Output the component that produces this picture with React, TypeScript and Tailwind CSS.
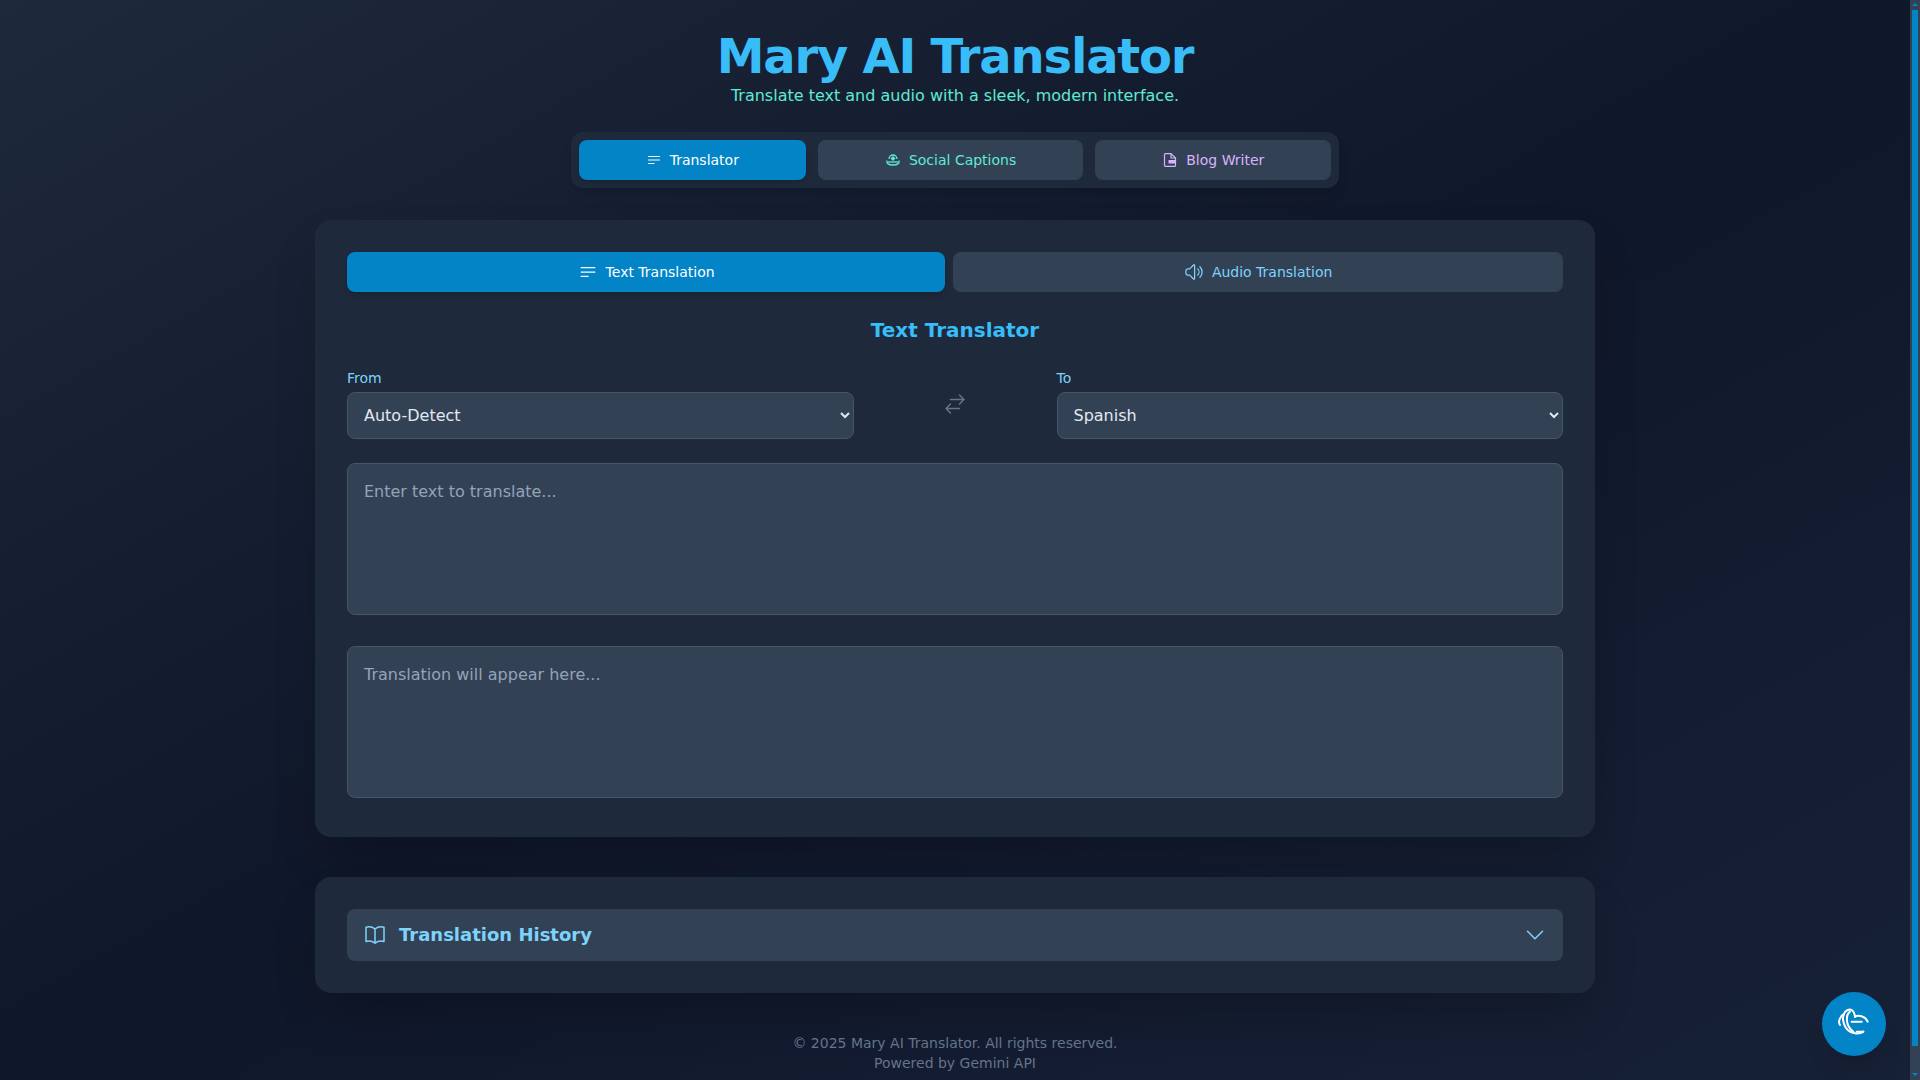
import {
  HiOutlineBars3BottomLeft,
  HiOutlineSpeakerWave,
  HiOutlineArrowsRightLeft,
  HiOutlineBookOpen,
  HiOutlineChevronDown,
} from "react-icons/hi2";

function ChatGlobeIcon() {
  return (
    <svg viewBox="0 0 24 24" fill="none" stroke="currentColor" strokeWidth="1.5" strokeLinecap="round" strokeLinejoin="round" className="size-8">
      <path d="M1.5 12.75C-0.2 10.5 1.5 6 4.5 4.5C5 2 8.5 0.5 10.25 1.5C11.8 2.5 12.5 4.5 12.75 6.5" />
      <path d="M12.75 6.5C15 5 20.5 6 22.25 10.25" />
      <path d="M4.5 4.5C2.5 9 5 15.5 9 17.75C11 19 16 20 19 17.75" />
      <path d="M9 2.75C6 5 5 13 11.5 17.75" />
      <path d="M10.25 10.25H17.75M14 17.75H19" />
    </svg>
  );
}

// 16px glyph in the tab bar: small badge on a tray
function SocialIcon() {
  return (
    <svg viewBox="0 0 16 16" fill="none" stroke="currentColor" strokeWidth="1.3" className="size-4">
      <path d="M2 8.5C1.3 11.5 3.5 13 8 13C12.5 13 14.7 11.5 14 8.5" />
      <path d="M4 7C4 4.8 5.8 3 8 3C10.2 3 12 4.8 12 7" />
      <path d="M8 4L10.5 6.5L8 9L5.5 6.5Z" fill="currentColor" stroke="none" />
      <path d="M2.5 10H13.5" />
    </svg>
  );
}

function BlogIcon() {
  return (
    <svg viewBox="0 0 16 16" fill="none" stroke="currentColor" strokeWidth="1.2" strokeLinejoin="round" className="size-4">
      <path d="M2.5 2.5C2.5 2 2.9 1.6 3.5 1.6H9L13.5 6V13.5C13.5 14 13.1 14.4 12.5 14.4H3.5C2.9 14.4 2.5 14 2.5 13.5Z" />
      <path d="M9 1.6V6H13.5" />
      <rect x="6.5" y="8" width="6.5" height="3.5" fill="currentColor" stroke="none" />
    </svg>
  );
}

const fieldClass = "w-full rounded-lg border border-[#475569] bg-[#334155] text-[#e2e8f0]";

export default function App() {
  return (
    <div className="flex h-screen bg-gradient-to-br from-[#1e293b] via-[#0f172a] to-[#172136] font-['DejaVu_Sans',sans-serif]">
      <div className="flex-1 overflow-y-auto [scrollbar-width:none]">
        <div className="mx-auto flex max-w-7xl flex-col pt-8">
          <header className="text-center">
            <h1 className="text-5xl font-bold tracking-tight text-[#38bdf8]">Mary AI Translator</h1>
            <p className="mt-1 text-base text-[#5eead4]">Translate text and audio with a sleek, modern interface.</p>
          </header>

          <nav className="mx-auto mt-6 flex gap-3 rounded-xl bg-[#1e293b] p-2 shadow-lg">
            <button className="flex h-10 items-center gap-2 rounded-lg bg-[#0284c7] px-[67px] text-sm text-white shadow-md">
              <HiOutlineBars3BottomLeft className="size-4" />
              Translator
            </button>
            <button className="flex h-10 items-center gap-2 rounded-lg bg-[#334155] px-[67px] text-sm text-[#5eead4]">
              <SocialIcon />
              Social Captions
            </button>
            <button className="flex h-10 items-center gap-2 rounded-lg bg-[#334155] px-[67px] text-sm text-[#d8b4fe]">
              <BlogIcon />
              Blog Writer
            </button>
          </nav>

          <main className="mt-8 rounded-2xl bg-[#1e293b] p-8 pb-[39px] shadow-2xl">
            <div className="flex gap-2">
              <button className="flex h-10 grow items-center justify-center gap-2 rounded-lg bg-[#0284c7] text-sm text-white shadow-md">
                <HiOutlineBars3BottomLeft className="size-5" />
                Text Translation
              </button>
              <button className="flex h-10 grow items-center justify-center gap-2 rounded-lg bg-[#334155] text-sm text-[#7dd3fc]">
                <HiOutlineSpeakerWave className="size-5" />
                Audio Translation
              </button>
            </div>

            <h2 className="mt-6 text-center text-xl font-semibold text-[#38bdf8]">Text Translator</h2>

            <div className="mt-6 flex items-center">
              <div className="flex-1">
                <label className="mb-1 block text-sm text-[#7dd3fc]">From</label>
                <select defaultValue="auto" className={`${fieldClass} p-3 text-base`}>
                  <option value="auto">Auto-Detect</option>
                  <option value="en">English</option>
                  <option value="es">Spanish</option>
                </select>
              </div>
              <div className="flex w-[203px] justify-center text-[#64748b]">
                <HiOutlineArrowsRightLeft className="size-6" />
              </div>
              <div className="flex-1">
                <label className="mb-1 block text-sm text-[#7dd3fc]">To</label>
                <select defaultValue="es" className={`${fieldClass} p-3 text-base`}>
                  <option value="en">English</option>
                  <option value="es">Spanish</option>
                </select>
              </div>
            </div>

            <textarea
              placeholder="Enter text to translate..."
              className={`${fieldClass} mt-6 block h-[152px] resize-none p-4 text-base placeholder:text-[#94a3b8]`}
            />
            <textarea
              readOnly
              placeholder="Translation will appear here..."
              className={`${fieldClass} mt-[31px] block h-[152px] resize-none p-4 text-base placeholder:text-[#94a3b8]`}
            />
          </main>

          <section className="mt-10 rounded-2xl bg-[#1e293b] p-8 shadow-2xl">
            <button className="flex h-[52px] w-full items-center justify-between rounded-lg bg-[#334155] px-4 text-[#7dd3fc]">
              <span className="flex items-center gap-3 text-lg font-semibold">
                <HiOutlineBookOpen className="size-6" />
                Translation History
              </span>
              <HiOutlineChevronDown className="size-6" />
            </button>
          </section>

          <footer className="mt-10 pb-8 text-center text-sm text-[#64748b]">
            <p>© 2025 Mary AI Translator. All rights reserved.</p>
            <p>Powered by Gemini API</p>
          </footer>
        </div>
      </div>

      {/* scrollbar as in the shot: track, thumb and the two small arrows */}
      <div className="flex w-[10px] flex-col items-center bg-[#334155]">
        <div className="mt-[3px] h-0 w-0 border-x-[3px] border-b-[3px] border-x-transparent border-b-[#0284c7]" />
        <div className="mt-[4px] h-[1036px] w-[6px] bg-[#0284c7]" />
        <div className="mt-auto mb-[4px] h-0 w-0 border-x-[3px] border-t-[3px] border-x-transparent border-t-[#0284c7]" />
      </div>

      <button className="fixed right-[34px] bottom-6 flex size-16 items-center justify-center rounded-full bg-[#0284c7] text-white shadow-xl">
        <ChatGlobeIcon />
      </button>
    </div>
  );
}
